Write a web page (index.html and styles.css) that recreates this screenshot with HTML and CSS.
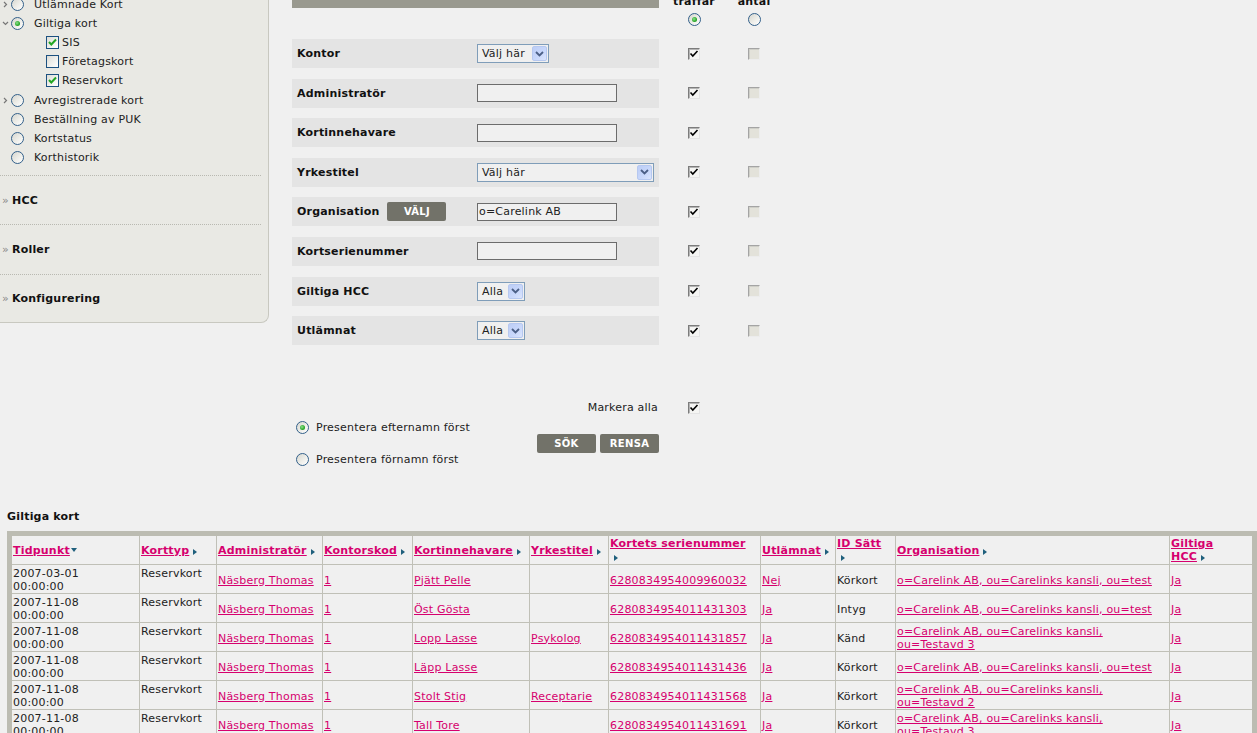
FILE: index.html
```html
<!DOCTYPE html>
<html lang="sv">
<head>
<meta charset="utf-8">
<title>Giltiga kort</title>
<link rel="stylesheet" href="styles.css">
</head>
<body>
<div class="page">
  <div class="top">
    <aside class="sidebar">
      <ul class="menu">
        <li class="mi"><span class="chev"><svg width="5" height="7" viewBox="0 0 5 7"><path d="M1 1 L3.5 3.5 L1 6" stroke="#777" stroke-width="1.2" fill="none"/></svg></span><span class="xr"></span><span class="mt">Utlämnade Kort</span></li>
        <li class="mi"><span class="chev"><svg width="7" height="5" viewBox="0 0 7 5"><path d="M1 1 L3.5 3.5 L6 1" stroke="#777" stroke-width="1.2" fill="none"/></svg></span><span class="xr on"></span><span class="mt">Giltiga kort</span></li>
        <li class="mi sub"><span class="xc"><svg width="11" height="11" viewBox="0 0 11 11"><path d="M2 5 L4.3 7.5 L9 2.5" stroke="#22a622" stroke-width="2" fill="none"/></svg></span><span class="mt">SIS</span></li>
        <li class="mi sub"><span class="xc"></span><span class="mt">Företagskort</span></li>
        <li class="mi sub"><span class="xc"><svg width="11" height="11" viewBox="0 0 11 11"><path d="M2 5 L4.3 7.5 L9 2.5" stroke="#22a622" stroke-width="2" fill="none"/></svg></span><span class="mt">Reservkort</span></li>
        <li class="mi"><span class="chev"><svg width="5" height="7" viewBox="0 0 5 7"><path d="M1 1 L3.5 3.5 L1 6" stroke="#777" stroke-width="1.2" fill="none"/></svg></span><span class="xr"></span><span class="mt">Avregistrerade kort</span></li>
        <li class="mi"><span class="chev"></span><span class="xr"></span><span class="mt">Beställning av PUK</span></li>
        <li class="mi"><span class="chev"></span><span class="xr"></span><span class="mt">Kortstatus</span></li>
        <li class="mi"><span class="chev"></span><span class="xr"></span><span class="mt">Korthistorik</span></li>
      </ul>
      <div class="sec"><span class="raq">»</span>HCC</div>
      <div class="sec"><span class="raq">»</span>Roller</div>
      <div class="sec last"><span class="raq">»</span>Konfigurering</div>
    </aside>

    <main class="search">
      <div class="hrow">
        <div class="titlebar">Sökkriterier</div>
        <div class="colhead">träffar<span class="xr on"></span></div>
        <div class="colhead">antal<span class="xr"></span></div>
      </div>

      <div class="frows">
        <div class="frow">
          <div class="fblock"><div class="flabel">Kontor</div>
            <span class="sel w72"><span class="seltext">Välj här</span><span class="selbtn"><svg width="9" height="6" viewBox="0 0 9 6"><path d="M1 1 L4.5 4.5 L8 1" stroke="#4b5f86" stroke-width="1.8" fill="none"/></svg></span></span>
          </div>
          <div class="fcol"><span class="ccb"><svg width="10" height="10" viewBox="0 0 10 10"><path d="M1.5 4.5 L3.8 7 L8.5 2" stroke="#000" stroke-width="1.6" fill="none"/></svg></span></div>
          <div class="fcol"><span class="ccb dis"></span></div>
        </div>
        <div class="frow">
          <div class="fblock"><div class="flabel">Administratör</div><input class="tin" type="text" value=""></div>
          <div class="fcol"><span class="ccb"><svg width="10" height="10" viewBox="0 0 10 10"><path d="M1.5 4.5 L3.8 7 L8.5 2" stroke="#000" stroke-width="1.6" fill="none"/></svg></span></div>
          <div class="fcol"><span class="ccb dis"></span></div>
        </div>
        <div class="frow">
          <div class="fblock"><div class="flabel">Kortinnehavare</div><input class="tin" type="text" value=""></div>
          <div class="fcol"><span class="ccb"><svg width="10" height="10" viewBox="0 0 10 10"><path d="M1.5 4.5 L3.8 7 L8.5 2" stroke="#000" stroke-width="1.6" fill="none"/></svg></span></div>
          <div class="fcol"><span class="ccb dis"></span></div>
        </div>
        <div class="frow">
          <div class="fblock"><div class="flabel">Yrkestitel</div>
            <span class="sel w177"><span class="seltext">Välj här</span><span class="selbtn"><svg width="9" height="6" viewBox="0 0 9 6"><path d="M1 1 L4.5 4.5 L8 1" stroke="#4b5f86" stroke-width="1.8" fill="none"/></svg></span></span>
          </div>
          <div class="fcol"><span class="ccb"><svg width="10" height="10" viewBox="0 0 10 10"><path d="M1.5 4.5 L3.8 7 L8.5 2" stroke="#000" stroke-width="1.6" fill="none"/></svg></span></div>
          <div class="fcol"><span class="ccb dis"></span></div>
        </div>
        <div class="frow">
          <div class="fblock"><div class="flabel">Organisation <span class="btn">VÄLJ</span></div><input class="tin" type="text" value="o=Carelink AB"></div>
          <div class="fcol"><span class="ccb"><svg width="10" height="10" viewBox="0 0 10 10"><path d="M1.5 4.5 L3.8 7 L8.5 2" stroke="#000" stroke-width="1.6" fill="none"/></svg></span></div>
          <div class="fcol"><span class="ccb dis"></span></div>
        </div>
        <div class="frow">
          <div class="fblock"><div class="flabel">Kortserienummer</div><input class="tin" type="text" value=""></div>
          <div class="fcol"><span class="ccb"><svg width="10" height="10" viewBox="0 0 10 10"><path d="M1.5 4.5 L3.8 7 L8.5 2" stroke="#000" stroke-width="1.6" fill="none"/></svg></span></div>
          <div class="fcol"><span class="ccb dis"></span></div>
        </div>
        <div class="frow">
          <div class="fblock"><div class="flabel">Giltiga HCC</div>
            <span class="sel w48"><span class="seltext">Alla</span><span class="selbtn"><svg width="9" height="6" viewBox="0 0 9 6"><path d="M1 1 L4.5 4.5 L8 1" stroke="#4b5f86" stroke-width="1.8" fill="none"/></svg></span></span>
          </div>
          <div class="fcol"><span class="ccb"><svg width="10" height="10" viewBox="0 0 10 10"><path d="M1.5 4.5 L3.8 7 L8.5 2" stroke="#000" stroke-width="1.6" fill="none"/></svg></span></div>
          <div class="fcol"><span class="ccb dis"></span></div>
        </div>
        <div class="frow">
          <div class="fblock"><div class="flabel">Utlämnat</div>
            <span class="sel w48"><span class="seltext">Alla</span><span class="selbtn"><svg width="9" height="6" viewBox="0 0 9 6"><path d="M1 1 L4.5 4.5 L8 1" stroke="#4b5f86" stroke-width="1.8" fill="none"/></svg></span></span>
          </div>
          <div class="fcol"><span class="ccb"><svg width="10" height="10" viewBox="0 0 10 10"><path d="M1.5 4.5 L3.8 7 L8.5 2" stroke="#000" stroke-width="1.6" fill="none"/></svg></span></div>
          <div class="fcol"><span class="ccb dis"></span></div>
        </div>
      </div>

      <div class="mrow">
        <div class="mlabel">Markera alla</div>
        <div class="fcol"><span class="ccb"><svg width="10" height="10" viewBox="0 0 10 10"><path d="M1.5 4.5 L3.8 7 L8.5 2" stroke="#000" stroke-width="1.6" fill="none"/></svg></span></div>
      </div>

      <div class="orow">
        <div class="radios">
          <div class="ropt"><span class="xr on"></span>Presentera efternamn först</div>
          <div class="ropt"><span class="xr"></span>Presentera förnamn först</div>
        </div>
        <div class="btns"><span class="btn big">SÖK</span><span class="btn big">RENSA</span></div>
      </div>
    </main>
  </div>

  <h2 class="rtitle">Giltiga kort</h2>
  <table class="res">
    <colgroup>
      <col style="width:128px"><col style="width:77px"><col style="width:106px"><col style="width:90px"><col style="width:117px"><col style="width:79px"><col style="width:152px"><col style="width:75px"><col style="width:60px"><col style="width:274px"><col style="width:82px">
    </colgroup>
    <thead>
      <tr>
        <th><a href="#">Tidpunkt</a><i class="sd"></i></th>
        <th><a href="#">Korttyp</a><i class="sa"></i></th>
        <th><a href="#">Administratör</a><i class="sa"></i></th>
        <th><a href="#">Kontorskod</a><i class="sa"></i></th>
        <th><a href="#">Kortinnehavare</a><i class="sa"></i></th>
        <th><a href="#">Yrkestitel</a><i class="sa"></i></th>
        <th><a href="#">Kortets serienummer</a><br><i class="sa"></i></th>
        <th><a href="#">Utlämnat</a><i class="sa"></i></th>
        <th><a href="#">ID Sätt</a><br><i class="sa"></i></th>
        <th><a href="#">Organisation</a><i class="sa"></i></th>
        <th><a href="#">Giltiga<br>HCC</a><i class="sa"></i></th>
      </tr>
    </thead>
    <tbody>
      <tr>
        <td>2007-03-01<br>00:00:00</td><td class="vt">Reservkort</td><td><a href="#">Näsberg Thomas</a></td><td><a href="#">1</a></td><td><a href="#">Pjätt Pelle</a></td><td></td><td><a href="#">6280834954009960032</a></td><td><a href="#">Nej</a></td><td>Körkort</td><td><a href="#">o=Carelink AB, ou=Carelinks kansli, ou=test</a></td><td><a href="#">Ja</a></td>
      </tr>
      <tr>
        <td>2007-11-08<br>00:00:00</td><td class="vt">Reservkort</td><td><a href="#">Näsberg Thomas</a></td><td><a href="#">1</a></td><td><a href="#">Öst Gösta</a></td><td></td><td><a href="#">6280834954011431303</a></td><td><a href="#">Ja</a></td><td>Intyg</td><td><a href="#">o=Carelink AB, ou=Carelinks kansli, ou=test</a></td><td><a href="#">Ja</a></td>
      </tr>
      <tr>
        <td>2007-11-08<br>00:00:00</td><td class="vt">Reservkort</td><td><a href="#">Näsberg Thomas</a></td><td><a href="#">1</a></td><td><a href="#">Lopp Lasse</a></td><td><a href="#">Psykolog</a></td><td><a href="#">6280834954011431857</a></td><td><a href="#">Ja</a></td><td>Känd</td><td><a href="#">o=Carelink AB, ou=Carelinks kansli, ou=Testavd 3</a></td><td><a href="#">Ja</a></td>
      </tr>
      <tr>
        <td>2007-11-08<br>00:00:00</td><td class="vt">Reservkort</td><td><a href="#">Näsberg Thomas</a></td><td><a href="#">1</a></td><td><a href="#">Läpp Lasse</a></td><td></td><td><a href="#">6280834954011431436</a></td><td><a href="#">Ja</a></td><td>Körkort</td><td><a href="#">o=Carelink AB, ou=Carelinks kansli, ou=test</a></td><td><a href="#">Ja</a></td>
      </tr>
      <tr>
        <td>2007-11-08<br>00:00:00</td><td class="vt">Reservkort</td><td><a href="#">Näsberg Thomas</a></td><td><a href="#">1</a></td><td><a href="#">Stolt Stig</a></td><td><a href="#">Receptarie</a></td><td><a href="#">6280834954011431568</a></td><td><a href="#">Ja</a></td><td>Körkort</td><td><a href="#">o=Carelink AB, ou=Carelinks kansli, ou=Testavd 2</a></td><td><a href="#">Ja</a></td>
      </tr>
      <tr>
        <td>2007-11-08<br>00:00:00</td><td class="vt">Reservkort</td><td><a href="#">Näsberg Thomas</a></td><td><a href="#">1</a></td><td><a href="#">Tall Tore</a></td><td></td><td><a href="#">6280834954011431691</a></td><td><a href="#">Ja</a></td><td>Körkort</td><td><a href="#">o=Carelink AB, ou=Carelinks kansli, ou=Testavd 3</a></td><td><a href="#">Ja</a></td>
      </tr>
    </tbody>
  </table>
</div>
</body>
</html>
```

FILE: styles.css
```css
html, body {
  overflow: hidden;
}
body {
  margin: 0;
  background: #f0f0f0;
  font-family: "DejaVu Sans", Verdana, sans-serif;
  font-size: 11px;
  line-height: 13px;
  letter-spacing: 0.2px;
  color: #222;
}
.page {
  margin-top: -16px;
}
.top {
  display: flex;
  align-items: flex-start;
}

/* ---------- sidebar ---------- */
.sidebar {
  flex: none;
  width: 269px;
  box-sizing: border-box;
  background: #e9e9e4;
  border-right: 1px solid #c8c8c0;
  border-bottom: 1px solid #c8c8c0;
  border-bottom-right-radius: 8px;
  padding-top: 11px;
}
.menu {
  list-style: none;
  margin: 0 0 8px 0;
  padding: 0;
}
.mi {
  height: 19.1px;
  display: flex;
  align-items: center;
}
.chev {
  width: 11px;
  display: inline-flex;
  justify-content: center;
  align-items: center;
}
.mi .xr {
  margin-right: 10px;
}
.mi.sub {
  padding-left: 46px;
}
.mi.sub .xc {
  margin-right: 3px;
}
.sec {
  height: 48.5px;
  border-top: 1px dotted #b9b9b1;
  margin-right: 7px;
  display: flex;
  align-items: center;
  font-weight: bold;
  color: #111;
}
.sec.last {
  height: 47.5px;
}
.raq {
  width: 10px;
  padding-left: 2px;
  font-weight: normal;
  color: #8a8a8a;
}

/* ---------- XP style controls ---------- */
.xr {
  flex: none;
  width: 13px;
  height: 13px;
  box-sizing: border-box;
  border-radius: 50%;
  border: 1px solid #33608a;
  background: linear-gradient(135deg, #d6d6cf 0%, #ececE7 50%, #ffffff 100%);
  display: inline-flex;
  align-items: center;
  justify-content: center;
}
.xr.on::after {
  content: "";
  width: 5px;
  height: 5px;
  border-radius: 50%;
  background: radial-gradient(circle at 40% 40%, #8ee08e 0%, #2aa82a 60%, #1b8f1b 100%);
}
.xc {
  flex: none;
  width: 13px;
  height: 13px;
  box-sizing: border-box;
  border: 1px solid #1c5180;
  background: linear-gradient(135deg, #dcdcd6 0%, #f6f6f3 70%, #ffffff 100%);
  display: inline-flex;
  align-items: center;
  justify-content: center;
}

/* ---------- search form ---------- */
.search {
  margin-left: 23px;
  width: 487px;
}
.hrow {
  display: grid;
  grid-template-columns: 367px 70px 50px;
  align-items: start;
}
.titlebar {
  height: 24px;
  box-sizing: border-box;
  background: #99998f;
  color: #fff;
  font-weight: bold;
  padding: 6px 0 0 8px;
  overflow: hidden;
}
.colhead {
  padding-top: 11px;
  font-weight: bold;
  color: #111;
  display: flex;
  flex-direction: column;
  align-items: center;
}
.colhead .xr {
  margin-top: 5px;
}
.frows {
  margin-top: 13px;
}
.frow {
  display: grid;
  grid-template-columns: 367px 70px 50px;
  height: 29px;
  margin-bottom: 10.6px;
  align-items: center;
}
.fblock {
  height: 29px;
  box-sizing: border-box;
  background: #e4e4e4;
  padding-left: 5px;
  display: flex;
  align-items: center;
}
.flabel {
  flex: 0 0 180px;
  font-weight: bold;
  color: #111;
  display: flex;
  align-items: center;
  gap: 8px;
}
.fcol {
  display: flex;
  justify-content: center;
  align-items: center;
}
.tin {
  width: 140px;
  height: 18px;
  box-sizing: border-box;
  margin: 0;
  border: 1px solid #6c6c6c;
  background: #f0f0f0;
  padding: 0 0 0 1px;
  font: inherit;
  letter-spacing: inherit;
  color: #222;
  outline: none;
}
.sel {
  height: 19px;
  box-sizing: border-box;
  border: 1px solid #7f9db9;
  background: #f0f0f0;
  display: inline-flex;
  align-items: center;
}
.sel.w72 { width: 72px; }
.sel.w177 { width: 177px; }
.sel.w48 { width: 48px; }
.seltext {
  padding-left: 4px;
  color: #222;
}
.selbtn {
  margin-left: auto;
  margin-right: 1px;
  width: 15px;
  height: 15px;
  box-sizing: border-box;
  border: 1px solid #b6c8f0;
  border-radius: 2px;
  background: linear-gradient(135deg, #bccdf6 0%, #c9d8fb 60%, #dbe5fd 100%);
  display: inline-flex;
  align-items: center;
  justify-content: center;
}
.btn {
  display: inline-flex;
  align-items: center;
  justify-content: center;
  width: 59px;
  height: 19px;
  border-radius: 2px;
  background: #727269;
  color: #fff;
  font-size: 10px;
  font-weight: bold;
  letter-spacing: 0.3px;
}

/* classic checkboxes */
.ccb {
  width: 12px;
  height: 12px;
  box-sizing: border-box;
  border: 1px solid;
  border-color: #7c7c7c #e4e4e4 #e4e4e4 #7c7c7c;
  box-shadow: inset 1px 1px 0 #b4b4b4;
  background: #f5f5f3;
  display: inline-flex;
  align-items: center;
  justify-content: center;
}
.ccb.dis {
  background: #e3e2da;
  border-color: #a4a4a4 #ececec #ececec #a4a4a4;
  box-shadow: inset 1px 1px 0 #cfcfc8;
}

.mrow {
  display: grid;
  grid-template-columns: 367px 70px 50px;
  height: 15px;
  align-items: center;
  margin-top: 55px;
}
.mlabel {
  text-align: right;
  padding-right: 1px;
}
.orow {
  width: 367px;
  display: flex;
  align-items: center;
}
.radios {
  padding-left: 4px;
  display: flex;
  flex-direction: column;
  gap: 8px;
}
.ropt {
  height: 24px;
  display: flex;
  align-items: center;
  gap: 7px;
}
.btns {
  margin-left: auto;
  display: flex;
  gap: 4px;
}

/* ---------- results ---------- */
.rtitle {
  margin: 38.5px 0 8.5px 7px;
  font-size: 11px;
  line-height: 13px;
  font-weight: bold;
  color: #111;
}
.res {
  margin-left: 7px;
  width: 1250px;
  table-layout: fixed;
  border-collapse: separate;
  border-spacing: 0;
  border: 5px solid #bcbcb2;
}
.res tr {
  height: 29px;
}
.res th,
.res td {
  padding: 1px;
  border-right: 1px solid #c0c0b7;
  border-bottom: 1px solid #c0c0b7;
  text-align: left;
  vertical-align: middle;
  font-weight: normal;
  line-height: 13px;
  color: #222;
  overflow: hidden;
}
.res td {
  padding-top: 2px;
  padding-bottom: 0;
}
.res th:last-child,
.res td:last-child {
  border-right: none;
}
.res td.vt {
  vertical-align: top;
}
.res a {
  color: #d6006e;
  text-decoration: underline;
}
.res th a {
  font-weight: bold;
}
.sa {
  display: inline-block;
  width: 0;
  height: 0;
  border-left: 4px solid #1f5f7c;
  border-top: 3.5px solid transparent;
  border-bottom: 3.5px solid transparent;
  margin-left: 4px;
  vertical-align: -1px;
}
.sd {
  display: inline-block;
  width: 0;
  height: 0;
  border-top: 4px solid #1f5f7c;
  border-left: 3.5px solid transparent;
  border-right: 3.5px solid transparent;
  margin-left: 1px;
  vertical-align: 2px;
}
```
